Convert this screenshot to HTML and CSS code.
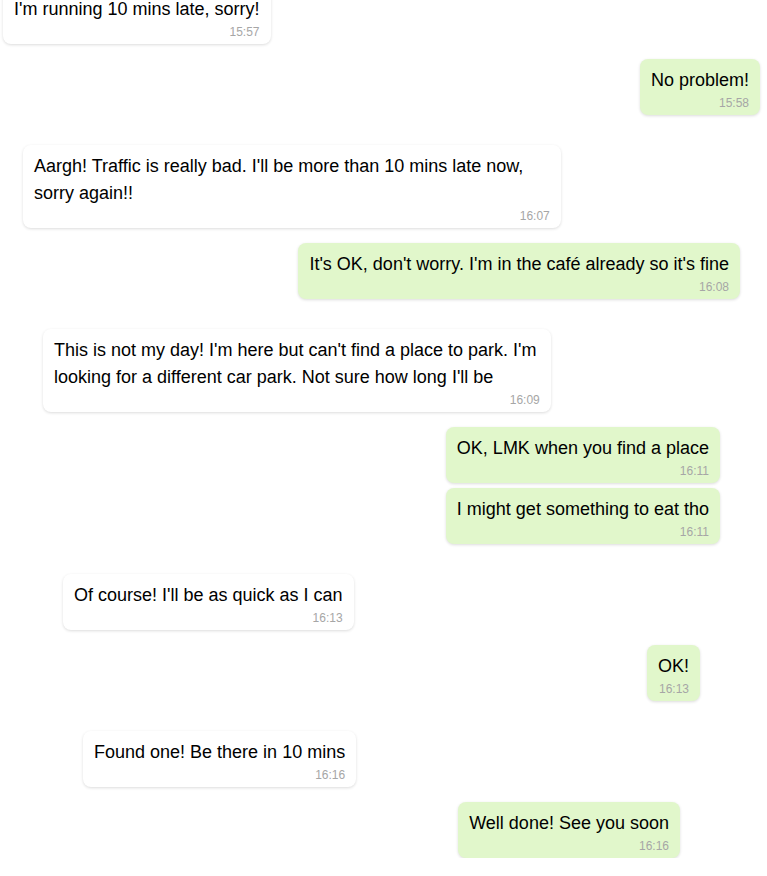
FILE: index.html
```html
<!DOCTYPE html>
<html lang="en">
<head>
<meta charset="utf-8">
<title>Chat</title>
<link rel="stylesheet" href="styles.css">
</head>
<body>
<div class="chat">
  <div class="level">
    <div class="msg in"><div class="text">I'm running 10 mins late, sorry!</div><div class="time">15:57</div></div>
    <div class="msg out"><div class="text">No problem!</div><div class="time">15:58</div></div>
    <div class="level">
      <div class="msg in"><div class="text">Aargh! Traffic is really bad. I'll be more than 10 mins late now, sorry again!!</div><div class="time">16:07</div></div>
      <div class="msg out"><div class="text">It's OK, don't worry. I'm in the café already so it's fine</div><div class="time">16:08</div></div>
      <div class="level">
        <div class="msg in"><div class="text">This is not my day! I'm here but can't find a place to park. I'm looking for a different car park. Not sure how long I'll be</div><div class="time">16:09</div></div>
        <div class="group">
          <div class="msg out"><div class="text">OK, LMK when you find a place</div><div class="time">16:11</div></div>
          <div class="msg out"><div class="text">I might get something to eat tho</div><div class="time">16:11</div></div>
        </div>
        <div class="level">
          <div class="msg in"><div class="text">Of course! I'll be as quick as I can</div><div class="time">16:13</div></div>
          <div class="msg out"><div class="text">OK!</div><div class="time">16:13</div></div>
          <div class="level">
            <div class="msg in"><div class="text">Found one! Be there in 10 mins</div><div class="time">16:16</div></div>
            <div class="msg out"><div class="text">Well done! See you soon</div><div class="time">16:16</div></div>
          </div>
        </div>
      </div>
    </div>
  </div>
</div>
</body>
</html>
```

FILE: styles.css
```css
html, body {
  margin: 0;
  padding: 0;
  background: #ffffff;
}

body {
  font-family: "Liberation Sans", Arial, sans-serif;
  color: #000000;
  overflow: hidden;
}

.chat {
  margin-top: -12px;
  padding: 0 7px 0 3px;
}

.level {
  display: flex;
  flex-direction: column;
  gap: 15px;
}

.level .level {
  padding: 15px 20px 0 20px;
}

.group {
  display: flex;
  flex-direction: column;
  align-items: flex-end;
  gap: 5px;
}

.msg {
  max-width: 75%;
  box-sizing: border-box;
  padding: 8px 11px 3px 11px;
  border-radius: 8px;
  box-shadow: 0 1px 3px rgba(0, 0, 0, 0.14);
}

.msg.in {
  align-self: flex-start;
  background: #ffffff;
}

.msg.out {
  align-self: flex-end;
  background: #e1f7cb;
  text-align: right;
}

.text {
  font-size: 18px;
  line-height: 27px;
}

.time {
  font-size: 12px;
  line-height: 18px;
  color: #a6a6a6;
  text-align: right;
}
```
